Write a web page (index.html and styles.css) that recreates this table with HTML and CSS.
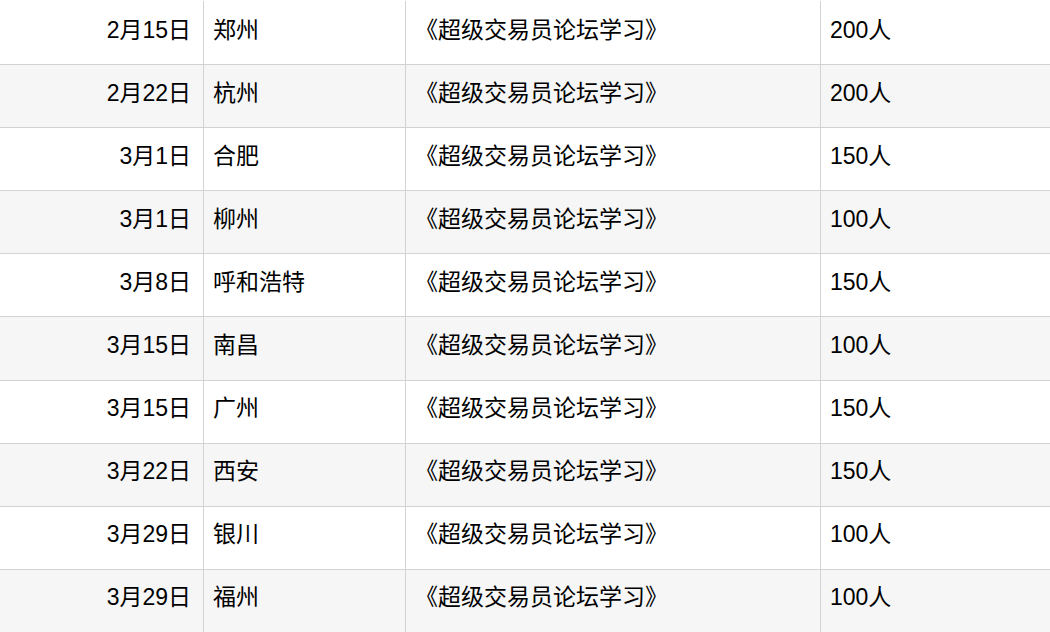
FILE: index.html
```html
<!DOCTYPE html>
<html lang="zh-CN">
<head>
<meta charset="utf-8">
<title>课程安排</title>
<link rel="stylesheet" href="styles.css">
</head>
<body>
<table class="schedule">
  <colgroup>
    <col class="c-date"><col class="c-city"><col class="c-course"><col class="c-count">
  </colgroup>
  <tbody>
    <tr class="first"><td class="date">2月15日</td><td>郑州</td><td>《超级交易员论坛学习》</td><td>200人</td></tr>
    <tr class="alt"><td class="date">2月22日</td><td>杭州</td><td>《超级交易员论坛学习》</td><td>200人</td></tr>
    <tr><td class="date">3月1日</td><td>合肥</td><td>《超级交易员论坛学习》</td><td>150人</td></tr>
    <tr class="alt"><td class="date">3月1日</td><td>柳州</td><td>《超级交易员论坛学习》</td><td>100人</td></tr>
    <tr><td class="date">3月8日</td><td>呼和浩特</td><td>《超级交易员论坛学习》</td><td>150人</td></tr>
    <tr class="alt"><td class="date">3月15日</td><td>南昌</td><td>《超级交易员论坛学习》</td><td>100人</td></tr>
    <tr><td class="date">3月15日</td><td>广州</td><td>《超级交易员论坛学习》</td><td>150人</td></tr>
    <tr class="alt"><td class="date">3月22日</td><td>西安</td><td>《超级交易员论坛学习》</td><td>150人</td></tr>
    <tr><td class="date">3月29日</td><td>银川</td><td>《超级交易员论坛学习》</td><td>100人</td></tr>
    <tr class="alt"><td class="date">3月29日</td><td>福州</td><td>《超级交易员论坛学习》</td><td>100人</td></tr>
  </tbody>
</table>
</body>
</html>
```

FILE: styles.css
```css
html, body {
  margin: 0;
  padding: 0;
  background: #ffffff;
  overflow: hidden;
}

.schedule {
  border-collapse: collapse;
  table-layout: fixed;
  width: 1052px;
  margin: 1px 0 0 -1px;
  font-family: "Liberation Sans", "Noto Sans CJK SC", sans-serif;
  font-size: 23px;
  color: #000;
}

.c-date { width: 204px; }
.c-city { width: 202px; }
.c-course { width: 415px; }
.c-count { width: 231px; }

.schedule td {
  height: 62px;
  padding: 0 9px;
  border: 1px solid #d3d3d3;
  vertical-align: middle;
  white-space: nowrap;
  box-sizing: border-box;
  line-height: 1;
  padding-bottom: 6px;
}

.schedule tr { height: 63.1px; }

.schedule tr.first td {
  border-top-color: #ffffff;
}

.schedule td.date {
  text-align: right;
  padding-right: 12px;
}

.schedule tr.alt td {
  background: #f6f6f6;
}
```
